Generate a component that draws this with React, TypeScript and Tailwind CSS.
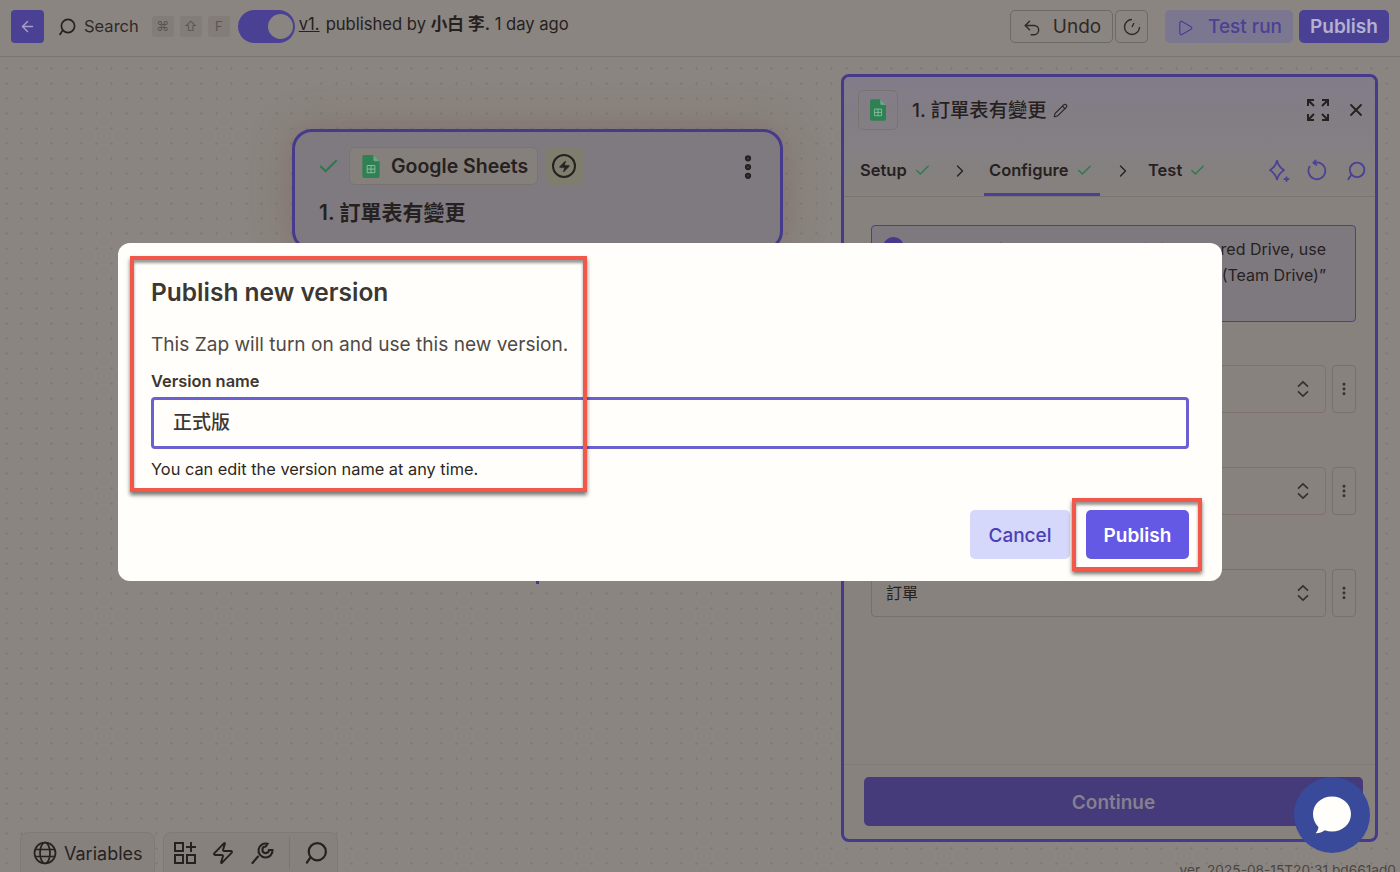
import { ArrowLeft, Check, ChevronRight, EllipsisVertical, Pencil, Play, Undo2, X, Zap } from 'lucide-react';

const sans = 'font-["Inter","Noto_Sans_CJK_TC",sans-serif]';

const SearchIcon = ({ size = 20, className = '' }: { size?: number; className?: string }) => (
  <svg width={size} height={size} viewBox="0 0 20 20" fill="none" stroke="currentColor" strokeWidth="1.7" className={className}>
    <circle cx="11" cy="9" r="6.6" />
    <path d="M5.6 13.6 3 17.4" strokeLinecap="round" />
  </svg>
);

const SheetIcon = ({ w = 18, h = 24 }: { w?: number; h?: number }) => (
  <svg width={w} height={h} viewBox="0 0 18 24">
    <path d="M2 0h9.5L18 6.5V22a2 2 0 0 1-2 2H2a2 2 0 0 1-2-2V2a2 2 0 0 1 2-2z" fill="#2f8153" />
    <path d="M11.5 0 18 6.5h-5a1.5 1.5 0 0 1-1.5-1.5z" fill="#6fa586" />
    <path d="M5 11h8v7.5H5zM5 14.7h8M9 11v7.5" fill="none" stroke="#8cc0a2" strokeWidth="1" />
  </svg>
);

const ExpandIcon = () => (
  <svg width="24" height="24" viewBox="0 0 24 24" fill="none" stroke="#26211f" strokeWidth="2">
    <path d="M2 8V2h6M2 2l6 6M22 8V2h-6M22 2l-6 6M2 16v6h6M2 22l6-6M22 16v6h-6M22 22l-6-6" />
  </svg>
);

const SparkleIcon = () => (
  <svg width="24" height="24" viewBox="0 0 24 24" fill="none" stroke="#4a4195" strokeWidth="1.7" strokeLinejoin="round">
    <path d="M10 1.500C11 6 13.500 9 17 11 13.500 13.500 11 16.500 10 20.500 9 16.500 6.500 13.500 3 11 6.500 9 9 6 10 1.500z" />
    <path d="M19.500 17.500v5.500M16.700 20.200h5.600" />
  </svg>
);

const ResetIcon = () => (
  <svg width="22" height="24" viewBox="0 0 22 24" fill="none" stroke="#4a4195" strokeWidth="1.8">
    <path d="M8 3.600a8.400 8.400 0 1 1-5 3.400" />
    <path d="M9 0.800 6.400 3.800l3.600 2.400" />
  </svg>
);

const UpDown = () => (
  <svg width="14" height="18" viewBox="0 0 14 18" fill="none" stroke="#35302d" strokeWidth="1.6">
    <path d="M2 6.600 7 1.800l5 4.800M2 11.400l5 4.800 5-4.800" />
  </svg>
);

const Kbd = ({ children }: { children: React.ReactNode }) => (
  <span className="flex h-[21px] w-[22px] items-center justify-center rounded-[3px] bg-[#827d78] text-[13px] text-[#5a5550]">{children}</span>
);

const SelectRow = ({ label, tinted }: { label?: string; tinted?: boolean }) => (
  <div className="flex h-[48px] gap-[6px]">
    <div className={`flex flex-1 items-center justify-between rounded-[4px] border pl-[14px] pr-[15px] ${tinted ? 'border-[#7f716e]' : 'border-[#76716c]'}`}>
      <span className="text-[16px] text-[#26211f]">{label}</span>
      <UpDown />
    </div>
    <div className="flex w-[24px] items-center justify-center rounded-[4px] border border-[#76716c]">
      <EllipsisVertical size={16} strokeWidth={2.4} color="#35302d" />
    </div>
  </div>
);

const Tab = ({ label, w }: { label: string; w: string }) => (
  <div className={`flex h-full items-center ${w}`}>
    <span className="text-[16.5px] font-semibold text-[#26211f]">{label}</span>
    <Check size={17} strokeWidth={2.1} color="#2f7a4d" className="ml-[7px]" />
  </div>
);

export default function App() {
  return (
    <div className={`${sans} relative flex h-screen w-screen flex-col overflow-hidden bg-[#8a8580] text-[#26211f]`}>
      <header className="flex h-[57px] shrink-0 items-center border-b border-[#7a7570] pb-[3px] pl-[11px] pr-[11px]">
        <button className="flex h-[33px] w-[33px] items-center justify-center rounded-[4px] bg-[#4a4195]">
          <ArrowLeft size={17} color="#a5a1c8" />
        </button>
        <SearchIcon size={20} className="ml-[13px]" />
        <span className="ml-[7px] text-[16.5px] text-[#2f2a27]">Search</span>
        <div className="ml-[13px] flex gap-[6px]">
          <Kbd>⌘</Kbd>
          <Kbd>⇧</Kbd>
          <Kbd>F</Kbd>
        </div>
        <div className="ml-[8px] flex h-[33px] w-[57px] items-center justify-end rounded-full bg-[#4a4195] pr-[2px]">
          <span className="h-[25px] w-[25px] rounded-full bg-[#8a8580]" />
        </div>
        <div className="ml-[4px] -mt-[4px] flex items-center gap-[6px] text-[16.6px] text-[#26211f]">
          <span className="underline">v1.</span>
          <span>published by <b className="font-semibold">小白 李.</b> 1 day ago</span>
        </div>
        <div className="ml-auto flex items-center">
          <button className="flex h-[33px] w-[103px] items-center justify-center gap-[11px] rounded-[5px] border border-[#6d6964] pt-[2px] text-[19px] text-[#2f2a27]">
            <Undo2 size={20} strokeWidth={1.7} />
            Undo
          </button>
          <button className="ml-[2px] flex h-[33px] w-[33px] items-center justify-center rounded-[5px] border border-[#6d6964]">
            <svg width="18" height="18" viewBox="0 0 18 18" fill="none" stroke="#2f2a27" strokeWidth="1.4">
              <path d="M9 1.500a7.500 7.500 0 1 0 7.500 7.500" />
              <path d="M9 9l2-4" />
              <path d="M12 2.400l.1.1M14.600 4.400l.1.1M16 7l.1.1" strokeWidth="1.8" />
            </svg>
          </button>
          <button className="ml-[17px] flex h-[33px] w-[128px] items-center justify-center gap-[14px] rounded-[5px] bg-[#7b7791] pt-[2px] text-[19px] font-medium text-[#4a4195]">
            <Play size={18} strokeWidth={1.7} />
            Test run
          </button>
          <button className="ml-[6px] flex h-[33px] w-[90px] items-center justify-center rounded-[5px] bg-[#4a4195] pt-[2px] text-[19px] font-semibold text-[#b4b1d0]">
            Publish
          </button>
        </div>
      </header>

      <main className="relative flex flex-1 justify-end bg-[radial-gradient(#7f7a76_1px,transparent_1.2px)] bg-[length:15px_15px] bg-[position:-1px_4px] pb-[30px] pr-[22px] pt-[17px]">
        <div className="absolute left-[292px] top-[72px] flex h-[122px] w-[491px] flex-col rounded-[20px] border-[3px] border-[#453a8c] bg-[#7f7a80] pl-[22px] pr-[24px] pt-[15px] shadow-[0_0_40px_rgba(120,85,80,0.45)]">
          <div className="flex items-center">
            <Check size={23} strokeWidth={2.2} color="#2f7a4d" />
            <div className="ml-[9px] flex h-[38px] w-[189px] items-center gap-[11px] rounded-[6px] border border-[#797470] bg-[#85807c] pl-[12px]">
              <SheetIcon w={18} h={23} />
              <span className="pt-[2px] text-[19.5px] font-semibold">Google Sheets</span>
            </div>
            <div className="ml-[7px] flex h-[38px] w-[38px] items-center justify-center rounded-[6px] bg-[#7f7d6d]">
              <div className="flex h-[24px] w-[24px] items-center justify-center rounded-full border-2 border-[#26211f]">
                <Zap size={13} fill="#26211f" strokeWidth={1} />
              </div>
            </div>
            <EllipsisVertical size={30} strokeWidth={3} className="ml-auto -mr-[7px] mt-[1px]" />
          </div>
          <div className="ml-[2px] mt-[13px] text-[21px] font-semibold leading-[30px]">1. 訂單表有變更</div>
        </div>

        <span className="absolute left-[536px] top-[524px] h-[3px] w-[3px] bg-[#453a8c]" />

        <aside className="flex w-[537px] flex-col rounded-[8px] border-[3px] border-[#453a8c] bg-[#87827e]">
          <div className="rounded-t-[6px] bg-gradient-to-b from-[#817c88] to-[#87827e]">
            <div className="flex h-[64px] items-center pl-[14px] pr-[9px] pt-[2px]">
              <div className="flex h-[40px] w-[40px] items-center justify-center rounded-[5px] border border-[#797470]">
                <SheetIcon w={16} h={26} />
              </div>
              <span className="ml-[14px] text-[19.300px] font-medium">1. 訂單表有變更</span>
              <Pencil size={15} strokeWidth={1.7} className="ml-[7px]" />
              <div className="ml-auto flex items-center gap-[16px]">
                <ExpandIcon />
                <X size={20} strokeWidth={2.2} />
              </div>
            </div>
            <div className="flex h-[56px] items-center border-b border-[#7a7570] pl-[16px] pr-[8px] pt-[4px]">
              <Tab label="Setup" w="w-[92px]" />
              <ChevronRight size={20} strokeWidth={1.6} className="-ml-[2px] mr-[19px]" />
              <div className="relative h-full">
                <Tab label="Configure" w="w-[116px]" />
                <span className="absolute -left-[5px] bottom-0 h-[3px] w-[116px] bg-[#4a4195]" />
              </div>
              <ChevronRight size={20} strokeWidth={1.6} className="ml-[8px] mr-[15px]" />
              <Tab label="Test" w="w-[80px]" />
              <div className="ml-auto flex items-center gap-[16px] text-[#4a4195]">
                <SparkleIcon />
                <ResetIcon />
                <SearchIcon size={22} />
              </div>
            </div>
          </div>

          <div className="flex flex-1 flex-col pl-[27px] pr-[19px] pt-[28px]">
            <div className="relative h-[97px] rounded-[4px] border border-[#4a4195] bg-[#7e797f] pr-[29px] pt-[10px] text-right text-[16px] leading-[26px]">
              <span className="absolute left-[11px] top-[11px] h-[21px] w-[21px] rounded-full bg-[#453a8c]" />
              <p>If your spreadsheet is in a Shared Drive, use</p>
              <p>the “Spreadsheet (Team Drive)”</p>
            </div>
            <div className="mt-[43px] flex flex-col gap-[54px]">
              <SelectRow tinted />
              <SelectRow tinted />
              <SelectRow label="訂單" />
            </div>
          </div>

          <div className="border-t border-[#7f7a75] pb-[13px] pl-[20px] pr-[12px] pt-[12px]">
            <button className="h-[49px] w-full rounded-[5px] bg-[#453a7a] pt-[3px] text-[19px] font-semibold text-[#85808f]">Continue</button>
          </div>
        </aside>

        <span className="absolute bottom-[-9px] right-[4px] text-[13.700px] text-[#4a4642]">ver. 2025-08-15T20:31.bd661ad0</span>

        <div className="absolute bottom-[-2px] left-[20px] flex gap-[8px]">
          <div className="flex h-[42px] w-[135px] items-center gap-[7px] rounded-t-[8px] border border-[#807a76] bg-[#86817d] pl-[12px]">
            <svg width="24" height="24" viewBox="0 0 24 24" fill="none" stroke="#26211f" strokeWidth="1.7">
              <circle cx="12" cy="12" r="10.500" />
              <ellipse cx="12" cy="12" rx="5" ry="10.500" />
              <path d="M2 8.500h20M2 15.500h20" />
            </svg>
            <span className="text-[18px]">Variables</span>
          </div>
          <div className="flex h-[42px] w-[175px] items-center rounded-t-[8px] border border-[#807a76] bg-[#86817d] pl-[9px]">
            <svg width="24" height="24" viewBox="0 0 24 24" fill="none" stroke="#26211f" strokeWidth="2">
              <path d="M2 2h8v8H2zM2 14h8v8H2zM14 14h8v8h-8zM18 1v10M13 6h10" />
            </svg>
            <Zap size={24} strokeWidth={1.9} className="ml-[14px]" />
            <svg width="24" height="24" viewBox="0 0 24 24" fill="none" stroke="#26211f" strokeWidth="2.100" className="ml-[15px]">
              <path d="M17.500 2.800a7 7 0 1 0 5 6.200h-3.500a3.300 3.300 0 1 1-3.300-3.500z" />
              <path d="M8 15.500 2.500 22" strokeLinecap="round" />
            </svg>
            <span className="ml-[15px] h-[32px] w-px bg-[#7a7570]" />
            <SearchIcon size={26} className="ml-[13px]" />
          </div>
        </div>

        <div className="absolute bottom-[19px] right-[30px] flex h-[76px] w-[76px] items-center justify-center rounded-full bg-[#3a4a9a]">
          <svg width="42" height="42" viewBox="0 0 42 42" fill="#fffefa">
            <path d="M21 2.500c10.600 0 19 7.500 19 17.500s-8.400 17.500-19 17.500c-2.600 0-5-.4-7.200-1.200-2.500 2-5.800 3-9.300 2.900 1.700-1.600 2.700-3.800 2.900-6.300C3.900 29.600 2 25 2 20 2 10 10.400 2.500 21 2.500z" />
          </svg>
        </div>
      </main>

      <div className="absolute left-[118px] top-[243px] flex h-[338px] w-[1104px] flex-col rounded-[12px] bg-[#fffefa] pl-[33px] pr-[33px] pt-[32px]">
        <h2 className="text-[24.500px] font-semibold leading-[34px] text-[#3d3733]">Publish new version</h2>
        <p className="mt-[21px] text-[19.100px] leading-[28px] text-[#504a45]">This Zap will turn on and use this new version.</p>
        <label className="mt-[11px] text-[16.400px] font-semibold leading-[24px] text-[#3d3733]">Version name</label>
        <div className="mt-[4px] flex h-[52px] items-center rounded-[4px] border-[3px] border-[#6b60d2] pl-[19px] pt-[1px] text-[19px] font-medium text-[#3d3733]">正式版</div>
        <p className="mt-[8px] text-[16.350px] leading-[24px] text-[#2c2724]">You can edit the version name at any time.</p>
        <div className="mt-[29px] flex justify-end gap-[16px]">
          <button className="h-[49px] w-[100px] rounded-[5px] bg-[#d5d7fb] pt-[3px] text-[19px] font-medium text-[#4b3fb5]">Cancel</button>
          <button className="h-[49px] w-[103px] rounded-[5px] bg-[#6359e4] pt-[3px] text-[19px] font-semibold text-white">Publish</button>
        </div>
        <div className="absolute left-[12px] top-[13px] h-[236px] w-[457px] border-[4px] border-[#f0594a] shadow-[0_3px_4px_rgba(0,0,0,0.55),inset_0_3px_3px_rgba(0,0,0,0.4)]" />
        <div className="absolute left-[954px] top-[255px] h-[73px] w-[130px] border-[4px] border-[#f0594a] shadow-[0_3px_4px_rgba(0,0,0,0.55),inset_0_3px_3px_rgba(0,0,0,0.4)]" />
      </div>
    </div>
  );
}
